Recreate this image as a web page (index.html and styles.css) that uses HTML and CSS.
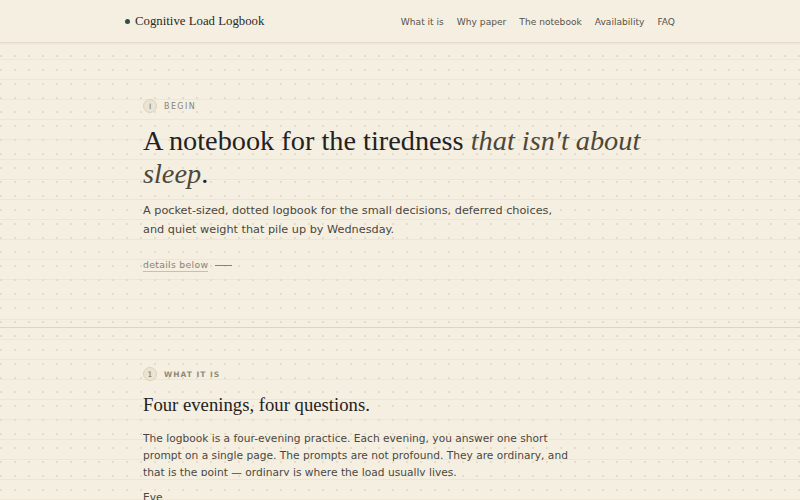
FILE: index.html
```html
<!DOCTYPE html>
<html lang="en">
<head>
<meta charset="utf-8">
<title>Cognitive Load Logbook</title>
<link rel="stylesheet" href="styles.css">
</head>
<body>
<header class="site-header">
  <div class="header-inner">
    <a class="brand" href="#"><span class="brand-dot"></span>Cognitive Load Logbook</a>
    <nav class="nav">
      <a href="#">What it is</a>
      <a href="#">Why paper</a>
      <a href="#">The notebook</a>
      <a href="#">Availability</a>
      <a href="#">FAQ</a>
    </nav>
  </div>
</header>
<main>
  <section class="section hero">
    <div class="inner">
      <div class="eyebrow"><span class="badge">I</span><span class="eyebrow-text">BEGIN</span></div>
      <h1 class="hero-title">A notebook for the tiredness <em>that isn't about sleep</em>.</h1>
      <p class="lede">A pocket-sized, dotted logbook for the small decisions, deferred choices, and quiet weight that pile up by Wednesday.</p>
      <a class="more" href="#"><span class="more-text">details below</span><span class="more-rule"></span></a>
    </div>
  </section>
  <section class="section what">
    <div class="inner">
      <div class="eyebrow"><span class="badge">1</span><span class="eyebrow-text bold">WHAT IT IS</span></div>
      <h2 class="section-title">Four evenings, four questions.</h2>
      <p class="body clip">The logbook is a four-evening practice. Each evening, you answer one short prompt on a single page. The prompts are not profound. They are ordinary, and that is the point — ordinary is where the load usually lives.</p>
      <p class="body">Eve</p>
    </div>
  </section>
</main>
</body>
</html>
```
FILE: styles.css
```css
* { box-sizing: border-box; }
html, body { margin: 0; padding: 0; }
body {
  background-color: #f5efe2;
  background-image:
    radial-gradient(circle at 1px 1px, #e4dccb 0.7px, transparent 1.1px),
    linear-gradient(to bottom, transparent 19px, #ede6d7 19px, #ede6d7 20px);
  background-size: 14px 14px, 100% 20px;
  background-position: 0 -1px, 0 0;
  font-family: "DejaVu Sans", sans-serif;
  color: #3a382f;
}
a { text-decoration: none; color: inherit; }

.site-header {
  background: #f5efe2;
  border-bottom: 1px solid #e4dcc9;
  box-shadow: 0 1px 2px rgba(120, 100, 60, 0.08);
}
.header-inner {
  width: 550px;
  margin: 0 auto;
  height: 42px;
  display: flex;
  align-items: center;
  justify-content: space-between;
}
.brand {
  display: flex;
  align-items: center;
  font-family: "Liberation Serif", serif;
  font-size: 12.8px;
  color: #2a2a26;
}
.brand-dot {
  width: 5px; height: 5px;
  border-radius: 50%;
  background: #24524f;
  margin-right: 5px;
  margin-top: 1px;
}
.nav { display: flex; gap: 13px; padding-top: 1px; }
.nav a { font-size: 9.1px; color: #57534a; }

.inner { width: 514px; margin: 0 auto; }
.section { border-bottom: 1px solid #ddd4c1; }
.hero { padding: 56px 0 55px; }
.what { padding-top: 39px; border-bottom: none; }

.eyebrow { display: flex; align-items: center; height: 14px; }
.badge {
  width: 14px; height: 14px;
  border-radius: 50%;
  background: #ece4d0;
  border: 1px solid #ddd3bc;
  font-size: 7.5px;
  color: #6f695a;
  display: flex; align-items: center; justify-content: center;
}
.eyebrow-text {
  margin-left: 7px;
  font-size: 8px;
  letter-spacing: 1.4px;
  color: #8a8371;
}
.eyebrow-text.bold { font-weight: bold; letter-spacing: 1px; font-size: 7.5px; color: #918a78; }

.hero-title {
  font-family: "Liberation Serif", serif;
  font-weight: normal;
  font-size: 28.3px;
  line-height: 33px;
  color: #23221e;
  margin: 11px 0 12px;
}
.hero-title em { color: #4d4838; }
.lede {
  font-size: 11.25px;
  line-height: 18.5px;
  color: #4a4740;
  margin: 0 0 20px;
  max-width: 430px;
}
.more { display: flex; width: fit-content; align-items: center; }
.more-text {
  font-size: 9.3px;
  color: #8a8371;
  letter-spacing: 0.3px;
  border-bottom: 1px solid #c9c0ab;
  padding-bottom: 1px;
}
.more-rule {
  width: 17px; height: 1px;
  background: #8a8371;
  margin-left: 7px;
}

.section-title {
  font-family: "Liberation Serif", serif;
  font-weight: normal;
  font-size: 18.7px;
  line-height: 24px;
  color: #23221e;
  margin: 12px 0 12.5px;
}
.body {
  font-size: 10.65px;
  line-height: 17px;
  color: #4a4740;
  margin: 0 0 13px;
  max-width: 435px;
}
.clip { height: 46px; overflow: hidden; }
```
